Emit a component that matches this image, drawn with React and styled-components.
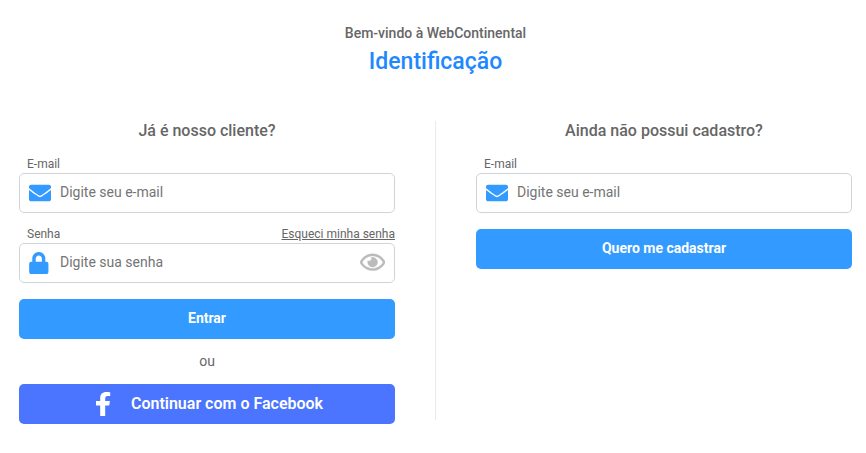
import React from 'react'
import styled, { createGlobalStyle } from 'styled-components'
import { FaEnvelope, FaLock, FaRegEye } from 'react-icons/fa'

const GlobalStyle = createGlobalStyle`
  * { box-sizing: border-box; }
  body {
    background-color: #fff;
    color: #666;
    font-family: Roboto, sans-serif;
    font-size: 14px;
    margin: 0;
  }
`

const Page = styled.main`
  padding: 24px 14px 0 19px;
`

const Header = styled.header`
  text-align: center;
`

const Welcome = styled.p`
  font-size: 14px;
  font-weight: 500;
  line-height: 18px;
  margin: 0;
`

const Title = styled.h1`
  color: #1e88ff;
  font-size: 23px;
  font-weight: 500;
  line-height: 30px;
  margin: 5px 0 0;
`

const Columns = styled.div`
  display: grid;
  grid-template-columns: 376px 1px 376px;
  column-gap: 40px;
  align-items: start;
  margin-top: 44px;
`

const Divider = styled.div`
  background-color: #e9ecef;
  height: 299px;
`

const Panel = styled.form`
  display: flex;
  flex-direction: column;
`

const PanelTitle = styled.h2`
  font-size: 16px;
  font-weight: 500;
  line-height: 20px;
  margin: 0 0 14px;
  text-align: center;
`

const Field = styled.div`
  margin-bottom: ${props => (props.$tight ? 12 : 16)}px;
`

const FieldHeader = styled.div`
  display: flex;
  font-size: 12px;
  justify-content: space-between;
  line-height: 18px;
  padding-left: 8px;
  a { color: inherit; }
`

const InputBox = styled.div`
  align-items: center;
  border: 1px solid #ced4da;
  border-radius: 5px;
  display: flex;
  height: 40px;
  padding: 0 9px 1px;
  input {
    background: none;
    border: 0;
    color: #666;
    flex: 1;
    font: 14px Roboto, sans-serif;
    min-width: 0;
    outline: none;
    padding: 0 0 1px;
    &::placeholder { color: #757575; }
  }
`

const IconSlot = styled.span`
  color: #339bff;
  display: flex;
  width: 31px;
  svg {
    height: 22px;
    width: ${props => props.$width}px;
  }
`

const Reveal = styled.span`
  color: #bbb;
  display: flex;
  svg {
    height: 22.4px;
    stroke-width: 10px;
    width: 25.2px;
  }
`

const Button = styled.button`
  align-items: center;
  background-color: ${props => (props.$facebook ? '#4b74ff' : '#339bff')};
  border: 0;
  border-radius: 5px;
  color: #fff;
  display: flex;
  font-family: inherit;
  font-size: ${props => (props.$facebook ? 16 : 14)}px;
  font-weight: ${props => (props.$facebook ? 600 : 700)};
  height: 40px;
  justify-content: center;
  padding: ${props => (props.$facebook ? '0 0 1px 5px' : '0 0 2px')};
  svg { margin-right: 20px; }
`

const Or = styled.p`
  line-height: 20px;
  margin: 12px 0 13px;
  text-align: center;
`

const FacebookIcon = () => (
  <svg width="15" height="24" viewBox="0 0 15 24" fill="currentColor">
    <path d="M4.200 24V13.500H0V9h4.200V6C4.200 2.200 6.400 0 10.200 0c1.800 0 3.200.1 4 .2V4h-2.500C9.900 4 9.200 4.900 9.200 6.400V9h4.700l-.7 4.500h-4V24z" />
  </svg>
)

const EmailField = ({tight}) => (
  <Field $tight={tight}>
    <FieldHeader>E-mail</FieldHeader>
    <InputBox>
      <IconSlot $width={22}><FaEnvelope /></IconSlot>
      <input type="email" placeholder="Digite seu e-mail" />
    </InputBox>
  </Field>
)

const App = () => (
  <>
    <GlobalStyle />
    <Page>
      <Header>
        <Welcome>Bem-vindo à WebContinental</Welcome>
        <Title>Identificação</Title>
      </Header>
      <Columns>
        <Panel>
          <PanelTitle>Já é nosso cliente?</PanelTitle>
          <EmailField tight />
          <Field>
            <FieldHeader>
              <span>Senha</span>
              <a href="#senha">Esqueci minha senha</a>
            </FieldHeader>
            <InputBox>
              <IconSlot $width={19.6}><FaLock /></IconSlot>
              <input type="password" placeholder="Digite sua senha" />
              <Reveal><FaRegEye /></Reveal>
            </InputBox>
          </Field>
          <Button type="button">Entrar</Button>
          <Or>ou</Or>
          <Button type="button" $facebook>
            <FacebookIcon />
            Continuar com o Facebook
          </Button>
        </Panel>
        <Divider />
        <Panel>
          <PanelTitle>Ainda não possui cadastro?</PanelTitle>
          <EmailField />
          <Button type="button">Quero me cadastrar</Button>
        </Panel>
      </Columns>
    </Page>
  </>
)

export default App
